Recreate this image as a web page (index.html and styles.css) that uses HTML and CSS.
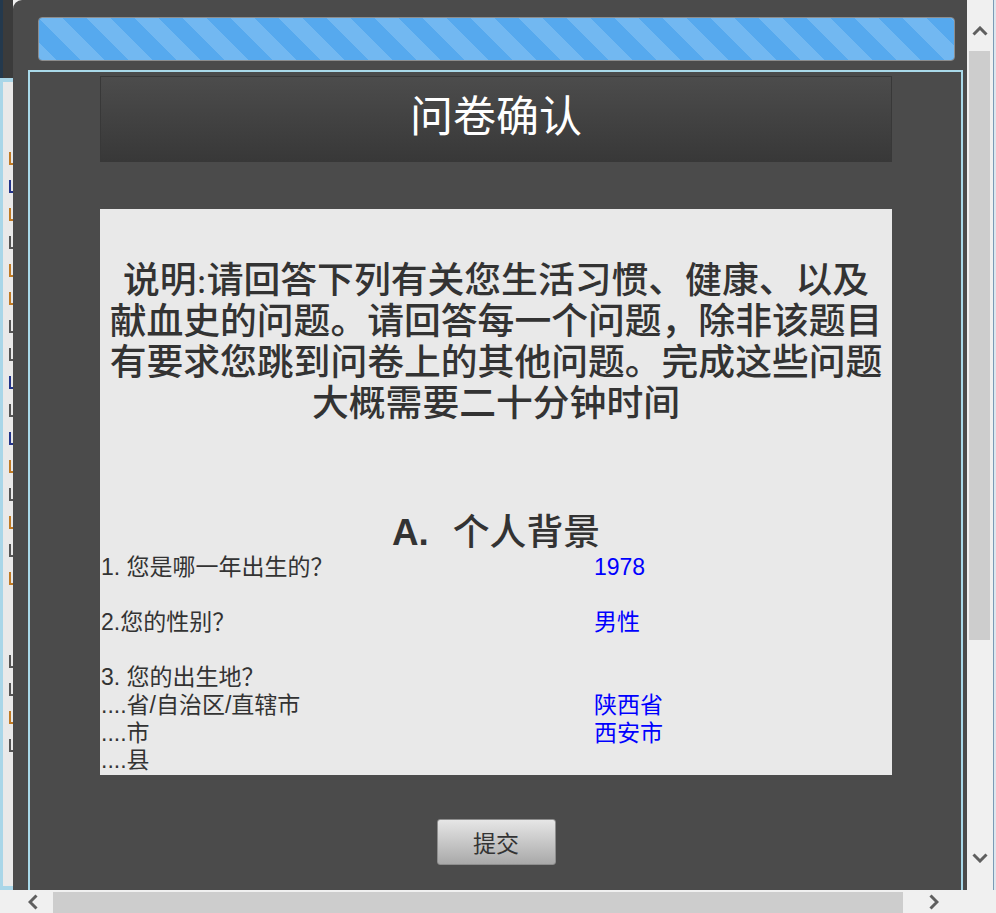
FILE: index.html
```html
<!DOCTYPE html>
<html lang="zh-CN">
<head>
    <meta charset="UTF-8">
    <meta name="viewport" content="width=device-width, initial-scale=1.0">
    <title>问卷确认</title>
    <link rel="stylesheet" href="styles.css">
</head>
<body>
    <div class="screen">
        <!-- page behind the dialog, only a thin strip shows -->
        <div class="backdrop">
            <div class="backdrop-top"></div>
            <div class="backdrop-page">
                <div class="backdrop-marks">
                    <span class="o"></span>
                    <span class="b"></span>
                    <span class="o"></span>
                    <span class="d"></span>
                    <span class="o"></span>
                    <span class="o"></span>
                    <span class="d"></span>
                    <span class="d"></span>
                    <span class="b"></span>
                    <span class="d"></span>
                    <span class="b"></span>
                    <span class="o"></span>
                    <span class="d"></span>
                    <span class="o"></span>
                    <span class="d"></span>
                    <span class="o"></span>
                    <span class="gap"></span>
                    <span class="d"></span>
                    <span class="d"></span>
                    <span class="o"></span>
                    <span class="d"></span>
                </div>
            </div>
        </div>

        <div class="dialog">
            <div class="progress"><div class="progress-bar"></div></div>

            <div class="confirm">
                <div class="confirm-header">
                    <h1>问卷确认</h1>
                </div>

                <div class="sheet">
                    <p class="intro">说明:请回答下列有关您生活习惯、健康、以及<br>献血史的问题。请回答每一个问题，除非该题目<br>有要求您跳到问卷上的其他问题。完成这些问题<br>大概需要二十分钟时间</p>

                    <h2 class="section"><span class="section-letter">A.</span>个人背景</h2>

                    <div class="answers">
                        <div class="q">1. 您是哪一年出生的？</div><div class="a">1978</div>
                        <div class="q"></div><div class="a"></div>
                        <div class="q">2.您的性别？</div><div class="a">男性</div>
                        <div class="q"></div><div class="a"></div>
                        <div class="q">3. 您的出生地？</div><div class="a"></div>
                        <div class="q">....省/自治区/直辖市</div><div class="a">陕西省</div>
                        <div class="q">....市</div><div class="a">西安市</div>
                        <div class="q">....县</div><div class="a"></div>
                    </div>
                </div>

                <div class="actions">
                    <button type="button">提交</button>
                </div>
            </div>
        </div>

        <div class="vscroll">
            <div class="vscroll-up">
                <svg width="16" height="10" viewBox="0 0 16 10"><path d="M1.5 8.5 L8 2 L14.5 8.5" fill="none" stroke="#5f5f5f" stroke-width="3"/></svg>
            </div>
            <div class="vscroll-thumb"></div>
            <div class="vscroll-down">
                <svg width="16" height="10" viewBox="0 0 16 10"><path d="M1.5 1.5 L8 8 L14.5 1.5" fill="none" stroke="#5f5f5f" stroke-width="3"/></svg>
            </div>
        </div>
        <div class="edge"></div>
    </div>

    <div class="hscroll">
        <div class="hscroll-left">
            <svg width="10" height="16" viewBox="0 0 10 16"><path d="M8.5 1.5 L2 8 L8.5 14.5" fill="none" stroke="#5f5f5f" stroke-width="3"/></svg>
        </div>
        <div class="hscroll-thumb"></div>
        <div class="hscroll-right">
            <svg width="10" height="16" viewBox="0 0 10 16"><path d="M1.5 1.5 L8 8 L1.5 14.5" fill="none" stroke="#5f5f5f" stroke-width="3"/></svg>
        </div>
    </div>
</body>
</html>
```

FILE: styles.css
```css
body {
    margin: 0;
    height: 913px;
    overflow: hidden;
    background-color: #f0f0f0;
    font-family: "Liberation Sans", "Noto Sans CJK SC", sans-serif;
}

.screen {
    display: flex;
    height: 890px;
}

/* strip of the page behind */
.backdrop {
    width: 13px;
    flex-shrink: 0;
    display: flex;
    flex-direction: column;
}

.backdrop-top {
    height: 78px;
    background: linear-gradient(to right, #24394d 0, #24394d 3px, #3b3b3b 3px);
}

.backdrop-page {
    flex: 1;
    background-color: #e9e9e9;
    border-top: 4px solid #a9d6e8;
    border-left: 3px solid #a9d6e8;
    border-bottom: 4px solid #a9d6e8;
    overflow: hidden;
}

/* cut-off ends of the text lines on the page behind */
.backdrop-marks {
    display: flex;
    flex-direction: column;
    gap: 15px;
    padding: 70px 0 0 6px;
}

.backdrop-marks span {
    width: 4px;
    height: 13px;
    border-left: 2px solid;
    border-bottom: 2px solid;
    box-sizing: border-box;
}

.backdrop-marks .o { color: #c07a24; }
.backdrop-marks .b { color: #23348a; }
.backdrop-marks .d { color: #555; }
.backdrop-marks .gap { border: 0; height: 40px; }

/* dialog */
.dialog {
    width: 954px;
    flex-shrink: 0;
    background-color: #4b4b4b;
    border-top-left-radius: 9px;
    padding: 17px 0 0 15px;
    box-sizing: border-box;
    overflow: hidden;
}

.progress {
    height: 44px;
    margin: 0 12px 9px 10px;
    border: 1px solid #8d8d8d;
    border-radius: 4px;
    box-sizing: border-box;
    overflow: hidden;
}

.progress-bar {
    height: 100%;
    background-color: #56a9ee;
    background-image: linear-gradient(45deg,
        rgba(255, 255, 255, 0.17) 25%, transparent 25%,
        transparent 50%, rgba(255, 255, 255, 0.17) 50%,
        rgba(255, 255, 255, 0.17) 75%, transparent 75%, transparent);
    background-size: 48px 48px;
}

.confirm {
    margin-right: 4px;
    height: 900px;
    border: 2px solid #a9d9e9;
    padding: 4px 69px 0 70px;
}

.confirm-header {
    height: 86px;
    box-sizing: border-box;
    border: 1px solid #383838;
    background: linear-gradient(#4c4c4c, #383838);
}

.confirm-header h1 {
    margin: 0;
    color: #fff;
    font-family: "Liberation Serif", "Noto Sans CJK SC", serif;
    font-size: 43px;
    font-weight: normal;
    line-height: 82px;
    text-align: center;
}

.sheet {
    margin-top: 47px;
    height: 566px;
    box-sizing: border-box;
    padding-top: 51px;
    background-color: #e9e9e9;
    color: #333;
}

.intro {
    margin: 0;
    font-family: "Liberation Serif", "Noto Sans CJK SC", serif;
    font-size: 36.8px;
    font-weight: 500;
    line-height: 41px;
    text-align: center;
}

.section {
    margin: 87px 0 0;
    font-family: "Liberation Serif", "Noto Sans CJK SC", serif;
    font-size: 36.8px;
    font-weight: 500;
    line-height: 43px;
    text-align: center;
}

.section-letter {
    margin-right: 24px;
    font-family: "Liberation Sans", sans-serif;
    font-weight: bold;
}

.answers {
    display: grid;
    grid-template-columns: 493px 1fr;
    padding-left: 1px;
    font-size: 23px;
    line-height: 27.6px;
}

.answers .q,
.answers .a {
    min-height: 27.6px;
}

.answers .a {
    color: #0000ff;
}

.actions {
    display: flex;
    justify-content: center;
    padding-top: 44px;
}

.actions button {
    width: 119px;
    height: 46px;
    border: 1px solid #8e8e8e;
    border-radius: 3px;
    background: linear-gradient(#e6e6e6, #a9a9a9);
    color: #333;
    font-family: "Liberation Sans", "Noto Sans CJK SC", sans-serif;
    font-size: 23px;
    cursor: pointer;
}

/* window scrollbars */
.vscroll {
    width: 26px;
    flex-shrink: 0;
    display: flex;
    flex-direction: column;
    background-color: #f0f0f0;
}

.vscroll-up {
    height: 51px;
    display: flex;
    justify-content: center;
    align-items: flex-start;
    padding-top: 26px;
    box-sizing: border-box;
}

.vscroll-thumb {
    height: 589px;
    margin: 0 3px 0 2px;
    background-color: #cdcdcd;
}

.vscroll-down {
    flex: 1;
    display: flex;
    justify-content: center;
    align-items: flex-end;
    padding-bottom: 27px;
}

.edge {
    flex: 1;
    background-color: #dde6ee;
    border-left: 1px solid #7b9bb6;
}

.hscroll {
    height: 23px;
    display: flex;
    align-items: stretch;
    background-color: #f0f0f0;
}

.hscroll-left {
    width: 53px;
    display: flex;
    align-items: center;
    justify-content: flex-end;
    padding-right: 15px;
    box-sizing: border-box;
}

.hscroll-thumb {
    width: 850px;
    margin-top: 2px;
    background-color: #cdcdcd;
}

.hscroll-right {
    width: 60px;
    display: flex;
    align-items: center;
    padding-left: 26px;
    box-sizing: border-box;
}
```
